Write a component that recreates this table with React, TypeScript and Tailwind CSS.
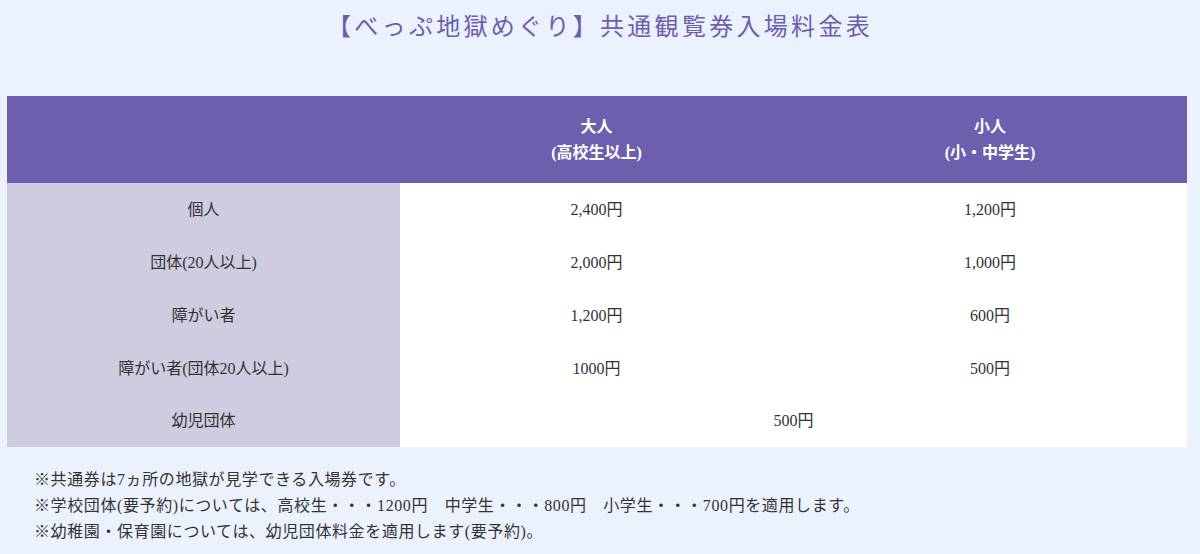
import React from 'react';

const rows = [
  { label: '個人', adult: '2,400円', child: '1,200円' },
  { label: '団体(20人以上)', adult: '2,000円', child: '1,000円' },
  { label: '障がい者', adult: '1,200円', child: '600円' },
  { label: '障がい者(団体20人以上)', adult: '1000円', child: '500円' },
];

const App = () => {
  return (
    <div
      className="min-h-[554px] w-[1200px] bg-[#ebf1fd] text-[#333333]"
      style={{ fontFamily: '"Liberation Serif", "Noto Sans CJK JP", serif' }}
    >
      {/* Title */}
      <h1 className="pt-[11px] text-center text-[24px] leading-[32px] tracking-[3.3px] text-[#6b5fae]">
        【べっぷ地獄めぐり】共通観覧券入場料金表
      </h1>

      {/* Price table */}
      <div className="mx-[7px] mt-[53px] w-[1180px]">
        <table className="w-full table-fixed border-collapse text-[16px]">
          <thead>
            <tr className="h-[87px] bg-[#6c5fad] font-bold text-white">
              <th className="w-[393px]"></th>
              <th className="w-[393px] leading-[26px]">
                大人
                <br />
                (高校生以上)
              </th>
              <th className="leading-[26px]">
                小人
                <br />
                (小・中学生)
              </th>
            </tr>
          </thead>
          <tbody>
            {rows.map((row) => (
              <tr key={row.label} className="h-[53px]">
                <td className="bg-[#cfcce0] text-center">{row.label}</td>
                <td className="bg-white text-center">{row.adult}</td>
                <td className="bg-white text-center">{row.child}</td>
              </tr>
            ))}
            <tr className="h-[52px]">
              <td className="bg-[#cfcce0] text-center">幼児団体</td>
              <td colSpan={2} className="bg-white text-center">
                500円
              </td>
            </tr>
          </tbody>
        </table>
      </div>

      {/* Notes */}
      <div className="pl-[34px] pt-[20px] text-[16px] leading-[26px] tracking-[0.6px]">
        <p>※共通券は7ヵ所の地獄が見学できる入場券です。</p>
        <p>※学校団体(要予約)については、高校生・・・1200円　中学生・・・800円　小学生・・・700円を適用します。</p>
        <p>※幼稚園・保育園については、幼児団体料金を適用します(要予約)。</p>
      </div>
    </div>
  );
};

export default App;
